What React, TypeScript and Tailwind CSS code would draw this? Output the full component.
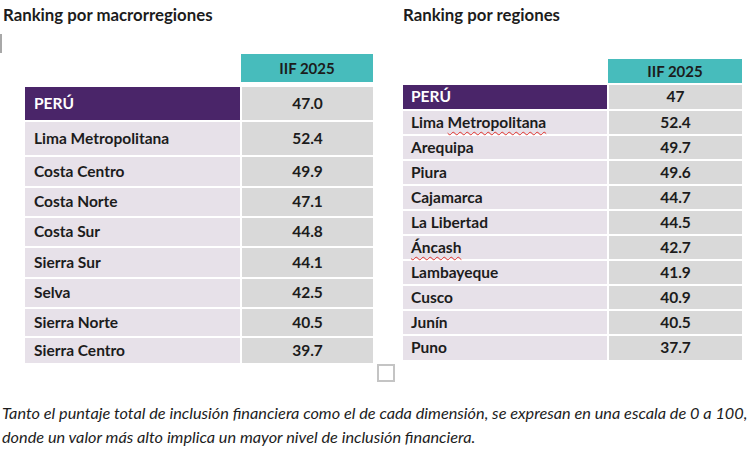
const macro = [
  { name: "Lima Metropolitana", value: "52.4", h: "h-[33px]" },
  { name: "Costa Centro", value: "49.9", h: "h-[29px]" },
  { name: "Costa Norte", value: "47.1", h: "h-[28px]" },
  { name: "Costa Sur", value: "44.8", h: "h-[28px]" },
  { name: "Sierra Sur", value: "44.1", h: "h-[29px]" },
  { name: "Selva", value: "42.5", h: "h-[28px]" },
  { name: "Sierra Norte", value: "40.5", h: "h-[27px]" },
  { name: "Sierra Centro", value: "39.7", h: "h-[25px]" },
];

const regiones = [
  { name: "Lima Metropolitana", value: "52.4" },
  { name: "Arequipa", value: "49.7" },
  { name: "Piura", value: "49.6" },
  { name: "Cajamarca", value: "44.7" },
  { name: "La Libertad", value: "44.5" },
  { name: "Áncash", value: "42.7" },
  { name: "Lambayeque", value: "41.9" },
  { name: "Cusco", value: "40.9" },
  { name: "Junín", value: "40.5" },
  { name: "Puno", value: "37.7" },
];

const squiggle = "underline decoration-wavy decoration-[#e0302a] decoration-1 underline-offset-[3px]";

const RegionName = ({ name }: { name: string }) => {
  if (name === "Lima Metropolitana") {
    return (
      <span>
        Lima <span className={squiggle}>Metropolitana</span>
      </span>
    );
  }
  if (name === "Áncash") return <span className={squiggle}>Áncash</span>;
  return <span>{name}</span>;
};

const App = () => {
  return (
    <div className="w-[752px] h-[450px] bg-white overflow-hidden font-['Lato',sans-serif] text-[#1c1c1c]">
      <div className="flex">
        {/* macrorregiones */}
        <div className="w-[403px] shrink-0">
          <h2 className="pl-[3px] pt-[4px] h-[27px] text-[16.8px] leading-[22px] font-bold">
            Ranking por macrorregiones
          </h2>
          <div className="mt-[7px] w-[2px] h-[19px] bg-[#a8a8a8]" />
          <div className="ml-[25px] mt-px grid grid-cols-[215px_132px] gap-x-[1px] text-[15px] font-bold">
            <div />
            <div className="h-[28px] bg-[#47bcbc] flex items-center justify-center">IIF 2025</div>
          </div>
          <div className="ml-[25px] mt-[5px] flex flex-col gap-[2px] text-[15.5px] font-bold">
            <div className="grid grid-cols-[215px_131px] gap-x-[2px] h-[33px]">
              <div className="bg-[#4a2569] text-white flex items-center pl-[9px]">PERÚ</div>
              <div className="bg-[#d9d9d9] flex items-center justify-center">47.0</div>
            </div>
            {macro.map((row) => (
              <div key={row.name} className={`grid grid-cols-[215px_131px] gap-x-[2px] ${row.h}`}>
                <div className="bg-[#e7e1e9] flex items-center pl-[9px]">{row.name}</div>
                <div className="bg-[#d9d9d9] flex items-center justify-center">{row.value}</div>
              </div>
            ))}
          </div>
        </div>

        {/* regiones */}
        <div className="flex-1">
          <h2 className="pt-[4px] h-[27px] text-[16.8px] leading-[22px] font-bold">Ranking por regiones</h2>
          <div className="mt-[32px] grid grid-cols-[205px_134px] text-[15px] font-bold">
            <div />
            <div className="h-[24px] bg-[#47bcbc] flex items-center justify-center">IIF 2025</div>
          </div>
          <div className="mt-[2px] flex flex-col gap-[2px] text-[15.5px] font-bold">
            <div className="grid grid-cols-[204px_133px] gap-x-[2px] h-[24px]">
              <div className="bg-[#4a2569] text-white flex items-center pl-[8px]">PERÚ</div>
              <div className="bg-[#d9d9d9] flex items-center justify-center">47</div>
            </div>
            {regiones.map((row, i) => (
              <div
                key={row.name}
                className={`grid grid-cols-[204px_133px] gap-x-[2px] ${i === regiones.length - 1 ? "h-[24px]" : "h-[23px]"}`}
              >
                <div className="bg-[#e7e1e9] flex items-center pl-[8px]">
                  <RegionName name={row.name} />
                </div>
                <div className="bg-[#d9d9d9] flex items-center justify-center">{row.value}</div>
              </div>
            ))}
          </div>
        </div>
      </div>

      <div className="ml-[377px] mt-px w-[18px] h-[18px] border-2 border-[#c4c4c4]" />

      <p className="mt-[19px] pl-[2px] text-[16.3px] leading-[24px] italic text-[#1c1c1c] whitespace-nowrap">
        Tanto el puntaje total de inclusión financiera como el de cada dimensión, se expresan en una escala de 0 a 100,
        <br />
        donde un valor más alto implica un mayor nivel de inclusión financiera.
      </p>
    </div>
  );
};

export default App;
